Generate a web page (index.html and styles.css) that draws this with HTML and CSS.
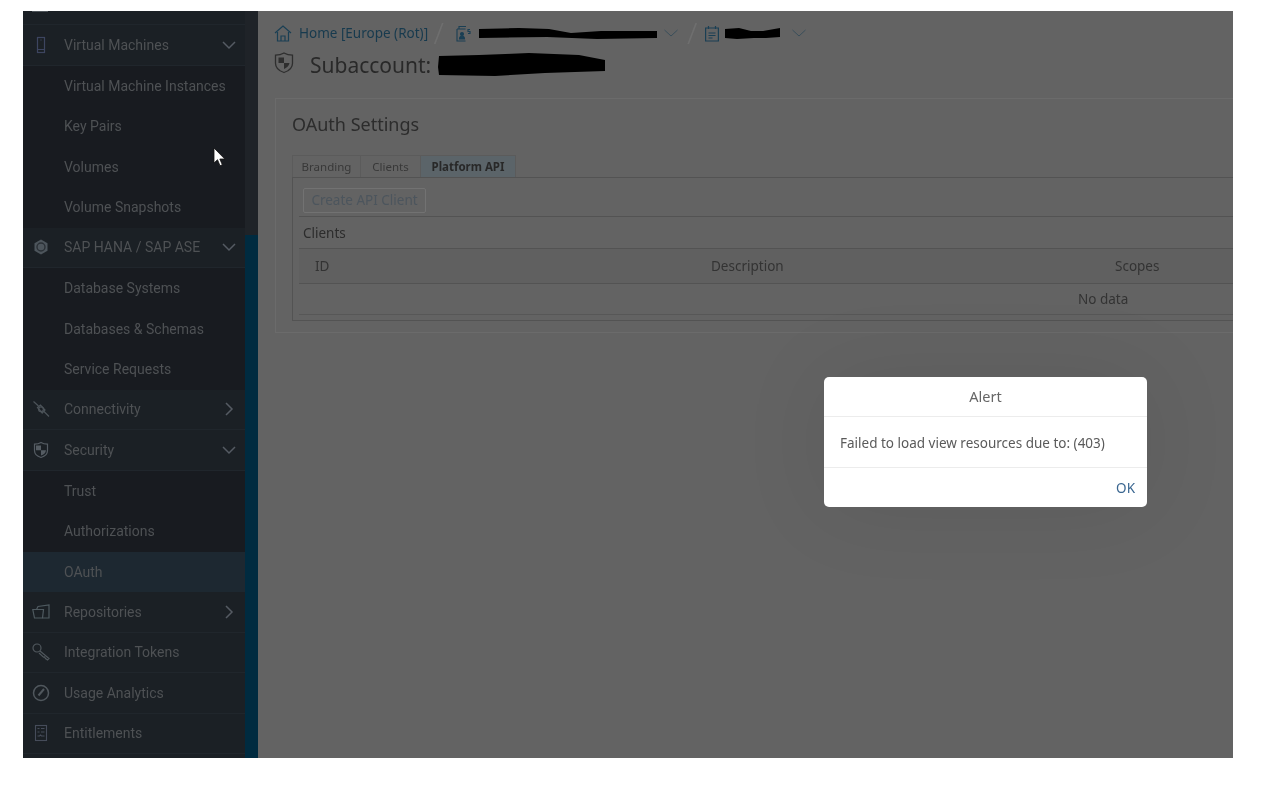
FILE: index.html
```html
<!DOCTYPE html>
<html>
<head>
  <title>OAuth Settings</title>
  <link rel="stylesheet" href="styles.css">
</head>
<body>
  <div class="shot">
    <div class="sidebar">
      <div class="nav">
        <div class="nav-top"><span class="nav-top-mark"></span></div>

        <div class="nav-row">
          <span class="nav-icon">
            <svg width="18" height="18" viewBox="0 0 18 18" fill="none" stroke="#3d4560" stroke-width="1.2"><rect x="5.5" y="1.5" width="7" height="15"/><path d="M5.5 13.5h7M9 3.5v1"/></svg>
          </span>
          <span class="nav-label">Virtual Machines</span>
          <svg class="nav-arrow" width="14" height="14" viewBox="0 0 14 14" fill="none" stroke="#555b63" stroke-width="1.5"><path d="M1 4l6 6 6-6"/></svg>
        </div>
        <div class="nav-row sub"><span class="nav-icon"></span><span class="nav-label">Virtual Machine Instances</span></div>
        <div class="nav-row sub"><span class="nav-icon"></span><span class="nav-label">Key Pairs</span></div>
        <div class="nav-row sub"><span class="nav-icon"></span><span class="nav-label">Volumes</span></div>
        <div class="nav-row sub"><span class="nav-icon"></span><span class="nav-label">Volume Snapshots</span></div>

        <div class="nav-row">
          <span class="nav-icon">
            <svg width="18" height="18" viewBox="0 0 18 18"><path d="M9 1.5l6.5 3.700v7.600L9 16.500l-6.500-3.700V5.200z" fill="#4d555c"/><circle cx="9" cy="9" r="4" fill="none" stroke="#2a3036" stroke-width="1.400"/></svg>
          </span>
          <span class="nav-label">SAP HANA / SAP ASE</span>
          <svg class="nav-arrow" width="14" height="14" viewBox="0 0 14 14" fill="none" stroke="#555b63" stroke-width="1.5"><path d="M1 4l6 6 6-6"/></svg>
        </div>
        <div class="nav-row sub"><span class="nav-icon"></span><span class="nav-label">Database Systems</span></div>
        <div class="nav-row sub"><span class="nav-icon"></span><span class="nav-label">Databases &amp; Schemas</span></div>
        <div class="nav-row sub"><span class="nav-icon"></span><span class="nav-label">Service Requests</span></div>

        <div class="nav-row">
          <span class="nav-icon">
            <svg width="18" height="18" viewBox="0 0 18 18" fill="none" stroke="#4c5359" stroke-width="1.2"><path d="M1.500 1.500l5 4.500M11.500 11l5.500 5.500"/><path d="M5.500 7.500l3-2.500 4.500 5-2.800 3z"/><circle cx="9" cy="9.300" r="2.400"/></svg>
          </span>
          <span class="nav-label">Connectivity</span>
          <svg class="nav-arrow" width="14" height="14" viewBox="0 0 14 14" fill="none" stroke="#555b63" stroke-width="1.5"><path d="M4 1l6 6-6 6"/></svg>
        </div>
        <div class="nav-row">
          <span class="nav-icon">
            <svg width="18" height="18" viewBox="0 0 18 18"><path d="M9 1.500c2 1.300 4.300 1.700 6.500 1.700v6.300c0 3.500-3 6-6.500 7-3.500-1-6.500-3.500-6.500-7V3.200C4.700 3.200 7 2.800 9 1.500z" fill="none" stroke="#555c63" stroke-width="1.200"/><path d="M4 4.500h5v4.700H4zM9 9.200h5c-.3 2.800-2.500 4.500-5 5.300z" fill="#555c63"/></svg>
          </span>
          <span class="nav-label">Security</span>
          <svg class="nav-arrow" width="14" height="14" viewBox="0 0 14 14" fill="none" stroke="#555b63" stroke-width="1.5"><path d="M1 4l6 6 6-6"/></svg>
        </div>
        <div class="nav-row sub"><span class="nav-icon"></span><span class="nav-label">Trust</span></div>
        <div class="nav-row sub"><span class="nav-icon"></span><span class="nav-label">Authorizations</span></div>
        <div class="nav-row sub active"><span class="nav-icon"></span><span class="nav-label">OAuth</span></div>

        <div class="nav-row">
          <span class="nav-icon">
            <svg width="18" height="18" viewBox="0 0 18 18" fill="none" stroke="#4f5a60" stroke-width="1.200"><path d="M.8 6.500h10.700l-1 8.500H2.500z"/><path d="M4.500 6.500L6 3.500l11-1.500v13h-6.500"/></svg>
          </span>
          <span class="nav-label">Repositories</span>
          <svg class="nav-arrow" width="14" height="14" viewBox="0 0 14 14" fill="none" stroke="#555b63" stroke-width="1.5"><path d="M4 1l6 6-6 6"/></svg>
        </div>
        <div class="nav-row">
          <span class="nav-icon">
            <svg width="18" height="18" viewBox="0 0 18 18" fill="none" stroke="#50575d" stroke-width="1.200"><circle cx="5" cy="5" r="4"/><path d="M8 8l9 7.500-1.500 1.500-2-1.500-1-1.500-1 .2-4.500-4.200"/></svg>
          </span>
          <span class="nav-label">Integration Tokens</span>
        </div>
        <div class="nav-row">
          <span class="nav-icon">
            <svg width="18" height="18" viewBox="0 0 18 18" fill="none" stroke="#50575d" stroke-width="1.500"><circle cx="9" cy="9" r="7.500"/><path d="M6.500 11.500L12 5" stroke-width="2"/></svg>
          </span>
          <span class="nav-label">Usage Analytics</span>
        </div>
        <div class="nav-row">
          <span class="nav-icon">
            <svg width="18" height="18" viewBox="0 0 18 18" fill="none" stroke="#464c5a" stroke-width="1.100"><rect x="3.500" y="1.500" width="11" height="15"/><path d="M5.500 4.500h2M9 4.500h3.500M5.500 8h2M9 8h3.500M5.500 12h2l1-1 1 1h3"/></svg>
          </span>
          <span class="nav-label">Entitlements</span>
        </div>
      </div>
      <div class="nav-scroll"><div class="nav-scroll-thumb"></div></div>
    </div>

    <div class="main">
      <div class="crumbs">
        <svg class="crumb-icon" width="18" height="17" viewBox="0 0 18 17" fill="none" stroke="#1a3f54" stroke-width="1.200"><path d="M1 8l8-7 8 7M3.500 7v9h11V7M7 16v-5h4v5"/></svg>
        <span class="crumb-link">Home [Europe (Rot)]</span>
        <span class="crumb-sep">/</span>
        <svg class="crumb-icon" width="15" height="17" viewBox="0 0 15 17" fill="none" stroke="#1a3f54" stroke-width="1.100"><path d="M3 3.500V1.500h7M1 4h8.500M1 4v12h8.500"/><circle cx="6" cy="9" r="1.500" fill="#1a3f54"/><path d="M3.500 14c0-2 1-3 2.500-3s2.500 1 2.500 3z" fill="#1a3f54"/><path d="M14 4.500h-2v2h2v2h-2"/></svg>
        <svg class="blot blot-a" width="178" height="12" viewBox="0 0 178 12"><path d="M0 2l40-1 30 1 22 4 30-2 56 0v7l-60 1-50-2-68 1z"/></svg>
        <svg class="crumb-down" width="14" height="8" viewBox="0 0 14 8" fill="none" stroke="#3a4e5b" stroke-width="1"><path d="M.5 1l6.500 6 6.500-6"/></svg>
        <span class="crumb-sep crumb-sep-b">/</span>
        <svg class="crumb-icon" width="14" height="17" viewBox="0 0 14 17" fill="none" stroke="#1a3f54" stroke-width="1.200"><path d="M.6 3h12.800v13H.6zM3.500 1v3M10.500 1v3M3.500 8h7M3.500 10.500h7M3.500 13h4"/></svg>
        <svg class="blot blot-b" width="55" height="12" viewBox="0 0 55 12"><path d="M0 2l14-1 12 3 12 0 17-3v9l-14 1-12 0-17 1-12-1z"/></svg>
        <svg class="crumb-down" width="14" height="8" viewBox="0 0 14 8" fill="none" stroke="#3a4e5b" stroke-width="1"><path d="M.5 1l6.500 6 6.500-6"/></svg>
      </div>

      <div class="page-title">
        <svg class="page-title-icon" width="20" height="22" viewBox="0 0 20 22"><path d="M10 1c2.500 1.500 5.500 2.200 8.500 2.200v8c0 4.500-4 7.800-8.500 9.300-4.500-1.500-8.500-4.800-8.500-9.300v-8C4.500 3.200 7.500 2.500 10 1z" fill="none" stroke="#2e2e2e" stroke-width="1.300"/><path d="M4.500 5.500H10V11H4.500zM10 11h5.500c-.4 3-3 5-5.500 6z" fill="#2e2e2e"/></svg>
        <span class="page-title-text">Subaccount:</span>
        <svg class="blot" width="168" height="23" viewBox="0 0 168 23"><path d="M1 3l40-1 50-2 50 2 26 5v11l-60 2-50 3-56-1-1-8z"/></svg>
      </div>

      <div class="panel">
        <div class="panel-title">OAuth Settings</div>
        <div class="tabs">
          <div class="tab tab-branding">Branding</div>
          <div class="tab tab-clients">Clients</div>
          <div class="tab tab-platform">Platform API</div>
        </div>
        <div class="tab-body">
          <div class="toolbar"><span class="btn-disabled">Create API Client</span></div>
          <div class="clients-title">Clients</div>
          <div class="table-head">
            <span>ID</span>
            <span>Description</span>
            <span>Scopes</span>
          </div>
          <div class="table-empty">No data</div>
          <div class="table-foot"></div>
        </div>
      </div>
    </div>

    <div class="dialog">
      <div class="dialog-title">Alert</div>
      <div class="dialog-body">Failed to load view resources due to: (403)</div>
      <div class="dialog-foot"><span class="dialog-ok">OK</span></div>
    </div>

    <svg class="pointer" width="13" height="20" viewBox="0 0 13 20"><path d="M1 1v15l3.500-3.300 2.500 6 2.300-1-2.500-5.700h5z" fill="#fff" stroke="#111" stroke-width=".8"/></svg>
  </div>
</body>
</html>
```

FILE: styles.css
```css
* {
  box-sizing: border-box;
}
html, body {
  margin: 0;
  padding: 0;
  background: #ffffff;
}
body {
  font-family: 'Noto Sans', 'Open Sans', sans-serif;
  font-size: 14px;
  height: 786px;
  overflow: hidden;
}
.shot {
  position: relative;
  display: flex;
  width: 1210px;
  height: 747px;
  margin: 11px 0 0 23px;
  overflow: hidden;
  background: #636363;
  filter: blur(0.35px);
}

/* Sidebar */
.sidebar {
  display: flex;
  flex: 0 0 235px;
  background: #1b2025;
}
.nav {
  flex: 0 0 222px;
}
.nav-top {
  height: 14px;
  border-bottom: 1px solid #20262c;
}
.nav-top-mark {
  display: block;
  width: 16px;
  height: 1px;
  margin-left: 9px;
  background: #50565b;
}
.nav-row {
  display: flex;
  align-items: center;
  height: 40.5px;
  padding-right: 9px;
  color: #4e5154;
  border-bottom: 1px solid #20262c;
  background: #1b2025;
}
.nav-row.sub {
  background: #181b20;
  border-bottom: 0;
}
.nav-row.sub.active {
  background: #1d2831;
}
.nav-icon {
  display: flex;
  flex: 0 0 41px;
  justify-content: center;
  padding-right: 6px;
}
.nav-label {
  flex: 1;
  font-family: Roboto, 'Noto Sans', sans-serif;
  font-size: 14px;
  white-space: nowrap;
}
.nav-scroll {
  flex: 0 0 13px;
  background: #1f2328;
}
.nav-scroll-thumb {
  height: 100%;
  margin-top: 224px;
  background: #002b40;
}

/* Main */
.main {
  flex: 1;
  min-width: 0;
  padding: 12px 0 0 16px;
}
.crumbs {
  display: flex;
  align-items: center;
  height: 20px;
  white-space: nowrap;
}
.crumb-link {
  margin-left: 7px;
  font-size: 13.5px;
  color: #173a4e;
}
.crumb-sep {
  margin: 0 11.5px 0 5.5px;
  font-size: 30px;
  font-weight: 300;
  line-height: 20px;
  color: #6f6f6f;
}
.crumb-sep-b {
  margin: 0 7.5px 0 9.5px;
}
.blot {
  flex: none;
  fill: #000000;
}
.blot-a {
  margin-left: 8px;
}
.blot-b {
  margin-left: 6px;
}
.crumb-down {
  margin: 0 0 0 7px;
}
.blot-b + .crumb-down {
  margin-left: 12px;
}
.page-title {
  display: flex;
  align-items: center;
  height: 26px;
  margin-top: 8px;
}
.page-title-icon {
  margin-top: -3px;
}
.page-title-text {
  margin: 2px 7px 0 16px;
  font-size: 21px;
  color: #292929;
}
.panel {
  height: 235px;
  margin: 21px 0 0 1px;
  padding: 0 0 0 16px;
  border: 1px solid #6b6b6b;
  border-right: 0;
}
.panel-title {
  height: 56px;
  padding-top: 13px;
  font-size: 18px;
  color: #2c2c2c;
}
.tabs {
  display: flex;
  height: 22px;
}
.tab {
  padding-top: 3px;
  font-size: 11.5px;
  text-align: center;
  color: #383838;
  border: 1px solid #5b5b5b;
  border-bottom: 0;
  border-left: 0;
}
.tab-branding {
  width: 69px;
  border-left: 1px solid #5b5b5b;
}
.tab-clients {
  width: 60px;
}
.tab-platform {
  width: 95px;
  font-weight: 700;
  background: #5b6469;
  color: #282828;
}
.tab-body {
  height: 144px;
  padding-left: 6px;
  border: 1px solid #535353;
  border-right: 0;
}
.toolbar {
  height: 39px;
  padding: 10px 0 0 4px;
  border-bottom: 1px solid #535353;
}
.btn-disabled {
  display: block;
  width: 123px;
  height: 25px;
  line-height: 23px;
  font-size: 13.5px;
  text-align: center;
  color: #4c555d;
  border: 1px solid #727272;
  border-radius: 2px;
}
.clients-title {
  height: 32px;
  padding: 7px 0 0 4px;
  font-size: 13.5px;
  color: #2c2c2c;
  border-bottom: 1px solid #535353;
}
.table-head {
  display: grid;
  grid-template-columns: 412px 404px 1fr;
  align-items: center;
  height: 35px;
  padding-left: 16px;
  font-size: 13.5px;
  color: #333333;
  background: #606060;
  border-bottom: 1px solid #535353;
}
.table-head span:nth-child(2) {
  margin-left: -16px;
}
.table-head span:nth-child(3) {
  margin-left: -16px;
}
.table-empty {
  height: 31px;
  padding: 6px 0 0 779px;
  font-size: 13.5px;
  color: #333333;
  border-bottom: 1px solid #575757;
}
.table-foot {
  height: 7px;
}

/* Dialog */
.dialog {
  position: absolute;
  left: 801px;
  top: 366px;
  width: 323px;
  height: 130px;
  background: #ffffff;
  border-radius: 5px;
  box-shadow: 0 0 90px rgba(0, 0, 0, 0.08);
}
.dialog-title {
  height: 40px;
  line-height: 39px;
  font-size: 14.5px;
  text-align: center;
  color: #666666;
  border-bottom: 1.5px solid #ececec;
}
.dialog-body {
  height: 51px;
  padding: 17px 16px 0;
  font-size: 13.5px;
  color: #5a5a5a;
  border-bottom: 1px solid #ececec;
}
.dialog-foot {
  padding: 10px 12px 0;
  text-align: right;
}
.dialog-ok {
  font-size: 13.5px;
  color: #3a6690;
}
.pointer {
  position: absolute;
  left: 190px;
  top: 136px;
}
```
